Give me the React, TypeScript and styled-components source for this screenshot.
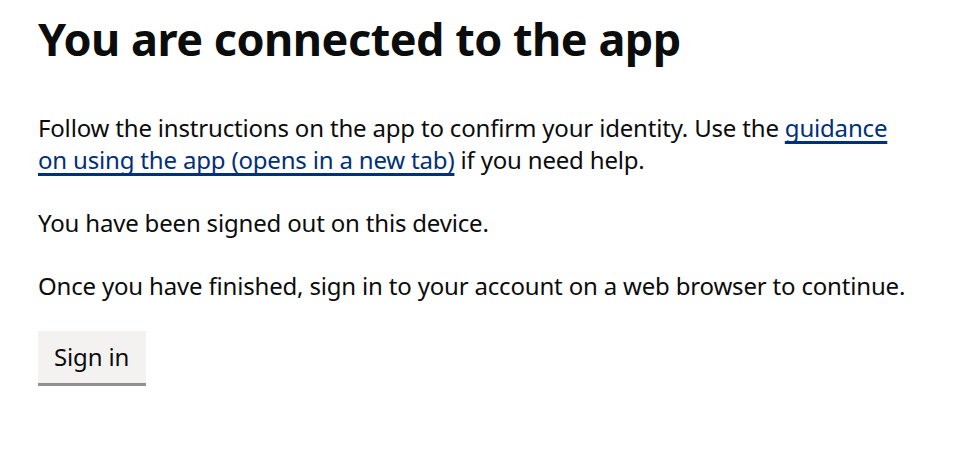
import React from "react";
import styled, { createGlobalStyle } from "styled-components";

const GlobalStyle = createGlobalStyle`
  html, body {
    margin: 0;
    padding: 0;
    background: #ffffff;
  }
  body {
    font-family: "Noto Sans", "Liberation Sans", Arial, sans-serif;
    color: #0b0c0c;
  }
`;

const Main = styled.main`
  display: flex;
  flex-direction: column;
  align-items: flex-start;
  padding: 14px 38px 0 38px;
`;

const Heading = styled.h1`
  margin: 0 0 48px 0;
  font-size: 45px;
  line-height: 50px;
  font-weight: 700;
  letter-spacing: -0.5px;
  color: #0b0c0c;
`;

const Body = styled.p`
  margin: 0 0 31px 0;
  font-size: 24px;
  line-height: 32px;
  font-weight: 400;
  letter-spacing: -0.18px;
  color: #0b0c0c;
  max-width: 876px;

  &:last-of-type {
    margin-bottom: 29px;
  }
`;

const Link = styled.a`
  color: #003078;
  text-decoration: underline;
  text-decoration-thickness: 3px;
  text-underline-offset: 4px;
  text-decoration-skip-ink: none;
`;

const Button = styled.button`
  font-family: inherit;
  font-size: 24px;
  line-height: 32px;
  font-weight: 400;
  letter-spacing: -0.16px;
  color: #0b0c0c;
  background: #f3f2f1;
  border: 0;
  border-bottom: 3px solid #929191;
  border-radius: 0;
  padding: 10px 17px 10px 16px;
  cursor: pointer;
`;

export default function App() {
  return (
    <>
      <GlobalStyle />
      <Main>
        <Heading>You are connected to the app</Heading>
        <Body>
          Follow the instructions on the app to confirm your identity. Use the{" "}
          <Link href="#">guidance on using the app (opens in a new tab)</Link> if you need help.
        </Body>
        <Body>You have been signed out on this device.</Body>
        <Body>Once you have finished, sign in to your account on a web browser to continue.</Body>
        <Button type="button">Sign in</Button>
      </Main>
    </>
  );
}
